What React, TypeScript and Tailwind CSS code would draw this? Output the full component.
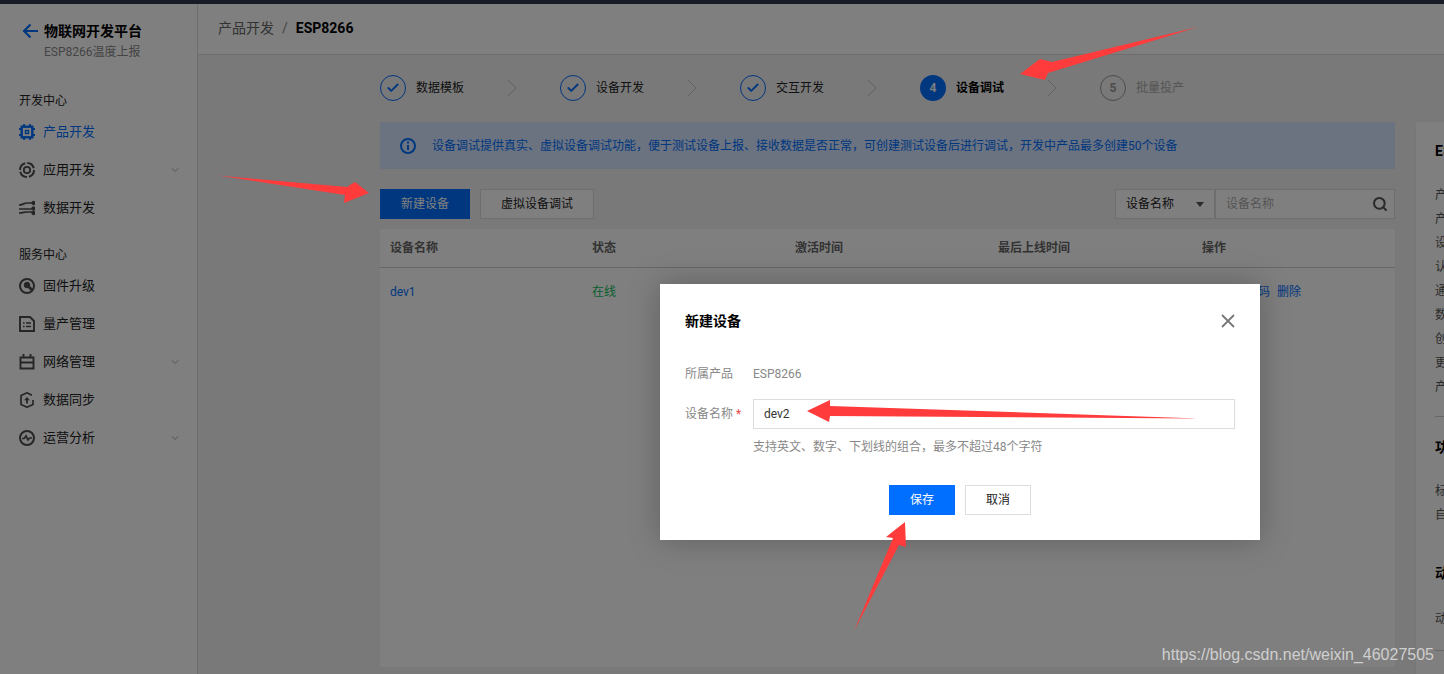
import React from 'react';
import { ChevronDown, Check, Search } from 'lucide-react';

const ChipIcon = () => (
    <svg width="16" height="16" viewBox="0 0 16 16" fill="none" stroke="currentColor" strokeWidth="2.4">
        <rect x="2.7" y="2.7" width="10.6" height="10.6" />
        <rect x="6.5" y="6.5" width="3" height="3" strokeWidth="1.4" fill="none" />
        <path d="M5 0v2M11 0v2M5 14v2M11 14v2M0 5h2M0 11h2M14 5h2M14 11h2" strokeWidth="1.8" />
    </svg>
);
const RingIcon = () => (
    <svg width="16" height="16" viewBox="0 0 16 16" fill="none" stroke="currentColor">
        <circle cx="8" cy="8" r="7" strokeWidth="2" strokeDasharray="9 2" />
        <circle cx="8" cy="8" r="3.2" strokeWidth="1.8" />
    </svg>
);
const SlidersIcon = () => (
    <svg width="16" height="16" viewBox="0 0 16 16" fill="none" stroke="currentColor" strokeWidth="1.7">
        <path d="M0 5c4 0 5-2 8-2h6M0 9h14M0 13c4 0 5-1 8-1h6" />
        <circle cx="14.5" cy="3" r="1.3" fill="currentColor" />
        <circle cx="14.5" cy="8.5" r="1.3" fill="currentColor" />
        <circle cx="14.5" cy="13" r="1.3" fill="currentColor" />
    </svg>
);
const WrenchIcon = () => (
    <svg width="16" height="16" viewBox="0 0 16 16" fill="none" stroke="currentColor">
        <circle cx="8" cy="8" r="7" strokeWidth="2" />
        <circle cx="8" cy="7" r="2.8" fill="currentColor" />
        <path d="M9 8l4.5 4.5" strokeWidth="2.8" />
    </svg>
);
const ListIcon = () => (
    <svg width="16" height="16" viewBox="0 0 16 16" fill="none" stroke="currentColor" strokeWidth="1.9">
        <path d="M1 1h10l4 4v10H1z" />
        <path d="M4 7h1.6M7 7h5M4 10.5h1.6M7 10.5h5" strokeWidth="1.6" />
    </svg>
);
const CalendarIcon = () => (
    <svg width="16" height="16" viewBox="0 0 16 16" fill="none" stroke="currentColor" strokeWidth="1.9">
        <path d="M1.5 3.5h13v11h-13zM1.5 8.5h13M4.5 0v3.5M11.5 0v3.5" />
    </svg>
);
const HexIcon = () => (
    <svg width="16" height="16" viewBox="0 0 16 16" fill="none" stroke="currentColor" strokeWidth="1.7">
        <path d="M13 3.2L8 .8 2 3.6v8.8l6 2.8 6-2.8V8" />
        <path d="M8 11.5V6.5" strokeWidth="1.8" />
        <path d="M5.2 8.2L8 5l2.8 3.2z" fill="currentColor" stroke="none" />
    </svg>
);
const PulseIcon = () => (
    <svg width="16" height="16" viewBox="0 0 16 16" fill="none" stroke="currentColor">
        <circle cx="8" cy="8" r="7" strokeWidth="2" />
        <path d="M3 8.5h2.2L7 6l2 4 1.6-2H13" strokeWidth="1.7" />
    </svg>
);
const BackArrow = () => (
    <svg width="16" height="16" viewBox="0 0 16 16" fill="none" stroke="#006eff" strokeWidth="2.2">
        <path d="M16 8H2M8.5 1.5L2 8l6.5 6.5" />
    </svg>
);
const InfoIcon = () => (
    <svg width="16" height="16" viewBox="0 0 16 16" fill="none" stroke="#006eff">
        <circle cx="8" cy="8" r="7" strokeWidth="2" />
        <path d="M8 7v5" strokeWidth="2" />
        <path d="M8 3.6v2" strokeWidth="2" />
    </svg>
);
const StepArrow = () => (
    <svg className="ml-[43px]" width="10" height="16" viewBox="0 0 10 16" fill="none" stroke="#c4c4c4">
        <path d="M1 0l8 8-8 8" />
    </svg>
);
const CloseIcon = () => (
    <svg width="14" height="14" viewBox="0 0 14 14" fill="none" stroke="#777" strokeWidth="1.8">
        <path d="M1 1l12 12M13 1L1 13" />
    </svg>
);

const NavItem = ({ icon, label, active, more }: { icon: React.ReactNode; label: string; active?: boolean; more?: boolean }) => (
    <div className={`flex h-[38px] items-center pl-[19px] pr-4 text-[13px] ${active ? 'text-[#006eff]' : 'text-[#222]'}`}>
        <span className={`mr-2 flex ${active ? 'text-[#006eff]' : 'text-[#4c4c4c]'}`}>{icon}</span>
        <span>{label}</span>
        {more && <ChevronDown className="ml-auto h-3 w-3 text-[#aaa]" />}
    </div>
);

const steps = ['数据模板', '设备开发', '交互开发', '设备调试', '批量投产'];

const Stepper = () => (
    <div className="mt-5 flex h-[26px]">
        {steps.map((name, i) => (
            <div key={name} className="flex w-[180px] items-center">
                {i < 3 && (
                    <span className="flex h-[26px] w-[26px] items-center justify-center rounded-full border border-[#006eff] text-[#006eff]">
                        <Check className="h-3.5 w-3.5" strokeWidth={3.2} />
                    </span>
                )}
                {i === 3 && (
                    <span className="flex h-[26px] w-[26px] items-center justify-center rounded-full bg-[#006eff] text-xs font-bold text-white">4</span>
                )}
                {i === 4 && (
                    <span className="flex h-[26px] w-[26px] items-center justify-center rounded-full border border-[#999] text-xs font-bold text-[#999]">5</span>
                )}
                <span className={`ml-2.5 w-12 text-xs ${i === 3 ? 'font-bold text-black' : i === 4 ? 'text-[#aaa]' : 'text-[#222]'}`}>{name}</span>
                {i < 4 && <StepArrow />}
            </div>
        ))}
    </div>
);

const infoRows = ['产品名称', '产品ID', '设备数量', '认证方式', '通信方式', '数据协议', '创建时间', '更新时间', '产品描述'];

const InfoPanel = () => (
    <aside className="mt-[67px] w-[29px] shrink-0 overflow-hidden whitespace-nowrap border-l border-[#eee] bg-white pl-[19px] pt-[19px] text-xs text-[#555]">
        <div className="text-sm leading-5 font-bold text-black">ESP8266</div>
        <div className="mt-[22px]">
            {infoRows.map((row) => (
                <div key={row} className="leading-6">{row}</div>
            ))}
        </div>
        <div className="mt-[17px] h-px bg-[#ccc]" />
        <div className="mt-5 text-sm leading-5 font-bold text-black">功能定义</div>
        <div className="mt-[22px] leading-6">标准功能</div>
        <div className="leading-6">自定义功能</div>
        <div className="mt-9 text-sm leading-5 font-bold text-black">动态注册</div>
        <div className="mt-6 leading-6">动态注册</div>
        <div className="mt-[19px] h-px bg-[#ccc]" />
    </aside>
);

const Dialog = () => (
    <div className="absolute left-[660px] top-[284px] h-[256px] w-[600px] bg-white px-[25px] pt-[27px] text-xs shadow-[0_0_30px_rgba(0,0,0,0.25)]">
        <div className="flex h-5 items-center justify-between">
            <h2 className="text-sm font-bold text-black">新建设备</h2>
            <CloseIcon />
        </div>
        <div className="mt-[33px] flex h-5 items-center text-[#888]">
            <span className="w-[68px]">所属产品</span>
            <span>ESP8266</span>
        </div>
        <div className="mt-[15px] flex items-center">
            <span className="w-[68px] text-[#888]">设备名称 <span className="text-[#e54545]">*</span></span>
            <div className="flex h-[30px] flex-1 items-center border border-[#ddd] pl-2.5 text-[#333]">dev2</div>
        </div>
        <div className="ml-[68px] mt-2 leading-5 text-[#888]">支持英文、数字、下划线的组合，最多不超过48个字符</div>
        <div className="mt-7 flex justify-center gap-2.5">
            <button className="h-[30px] w-[66px] bg-[#006eff] text-white">保存</button>
            <button className="h-[30px] w-[66px] border border-[#ddd] text-[#222]">取消</button>
        </div>
    </div>
);

export default function App() {
    return (
        <div className="relative h-screen w-screen overflow-hidden bg-[#f2f2f2] font-[Roboto,'Noto_Sans_CJK_SC',sans-serif]">
            <div className="h-1 bg-[#2f384c]" />
            <div className="flex h-[670px]">
                {/* Sidebar */}
                <aside className="w-[198px] shrink-0 border-r border-[#ddd] bg-white pt-[17px]">
                    <div className="flex h-5 items-center gap-1.5 pl-[22px] text-sm font-bold text-black">
                        <BackArrow />
                        物联网开发平台
                    </div>
                    <div className="mt-px pl-[44px] text-xs leading-5 text-[#888]">ESP8266温度上报</div>
                    <div className="mt-[29px] pl-[19px] text-xs leading-5 text-[#222]">开发中心</div>
                    <div className="mt-0.5">
                        <NavItem icon={<ChipIcon />} label="产品开发" active />
                        <NavItem icon={<RingIcon />} label="应用开发" more />
                        <NavItem icon={<SlidersIcon />} label="数据开发" />
                    </div>
                    <div className="mt-[18px] pl-[19px] text-xs leading-5 text-[#222]">服务中心</div>
                    <div className="mt-0.5">
                        <NavItem icon={<WrenchIcon />} label="固件升级" />
                        <NavItem icon={<ListIcon />} label="量产管理" />
                        <NavItem icon={<CalendarIcon />} label="网络管理" more />
                        <NavItem icon={<HexIcon />} label="数据同步" />
                        <NavItem icon={<PulseIcon />} label="运营分析" more />
                    </div>
                </aside>

                <main className="flex min-w-0 flex-1 flex-col">
                    {/* Breadcrumb */}
                    <header className="flex h-[51px] shrink-0 items-center border-b border-[#ddd] bg-white pb-0.5 pl-5 text-sm">
                        <span className="text-[#666]">产品开发</span>
                        <span className="mx-2 text-[#888]">/</span>
                        <span className="font-bold text-black">ESP8266</span>
                    </header>

                    <div className="flex min-h-0 flex-1">
                        <div className="ml-[182px] flex w-[1015px] shrink-0 flex-col">
                            <Stepper />
                            <div className="mt-[21px] flex h-[47px] items-center gap-4 bg-[#d5e7ff] pl-5 text-xs text-[#006eff]">
                                <InfoIcon />
                                设备调试提供真实、虚拟设备调试功能，便于测试设备上报、接收数据是否正常，可创建测试设备后进行调试，开发中产品最多创建50个设备
                            </div>

                            <div className="mt-5 flex h-[30px] text-xs">
                                <button className="w-[90px] bg-[#006eff] text-white">新建设备</button>
                                <button className="ml-2.5 w-[114px] border border-[#ddd] bg-white text-[#222]">虚拟设备调试</button>
                                <div className="ml-auto flex w-[100px] items-center justify-between border border-[#ddd] bg-white px-2.5 text-[#222]">
                                    设备名称
                                    <span className="h-0 w-0 border-x-[4px] border-t-[5px] border-x-transparent border-t-[#555]" />
                                </div>
                                <div className="flex w-[180px] items-center justify-between border border-[#ddd] bg-white pl-2.5 pr-1.5 text-[#aaa]">
                                    设备名称
                                    <Search className="h-4 w-4 text-[#555]" strokeWidth={3} />
                                </div>
                            </div>

                            <div className="mb-[7px] mt-2.5 flex-1 bg-white text-xs">
                                <div className="grid h-[39px] grid-cols-[202px_203px_203px_204px_1fr] items-center border-b border-[#ccc] font-bold text-[#666]">
                                    {['设备名称', '状态', '激活时间', '最后上线时间', '操作'].map((h) => (
                                        <div key={h} className="px-2.5">{h}</div>
                                    ))}
                                </div>
                                <div className="grid h-12 grid-cols-[202px_203px_203px_204px_1fr] items-center">
                                    <div className="px-2.5 text-[#006eff]">dev1</div>
                                    <div className="px-2.5 text-[#0abf5b]">在线</div>
                                    <div className="px-2.5 text-[#444]">2020-06-12 10:21:08</div>
                                    <div className="px-2.5 text-[#444]">2020-06-12 10:21:08</div>
                                    <div className="whitespace-nowrap pl-[15px] text-[#006eff]">查看 二维码<span className="ml-[7px]">删除</span></div>
                                </div>
                            </div>
                        </div>
                        <div className="w-5 shrink-0" />
                        <InfoPanel />
                    </div>
                </main>
            </div>

            {/* Scrim */}
            <div className="absolute inset-0 bg-black/50" />

            <Dialog />

            {/* Red annotation arrows */}
            <svg className="pointer-events-none absolute inset-0" width="1444" height="674" fill="#ff3b3b">
                <polygon points="1198,27 1052,62 1040,59 1020,74 1045,80 1048,73" />
                <polygon points="218,175.5 347,187 355,182 369,193 344,203 345,195" />
                <polygon points="1199,418.5 830,406 830,400 807,411 829,422 830,416" />
                <polygon points="854,631 893,538 886,537 905,522 906,547 899,545" />
            </svg>

            <div className="absolute bottom-[9px] right-[10px] font-['Liberation_Sans',sans-serif] text-base leading-5 text-[#cfcfcf]">https://blog.csdn.net/weixin_46027505</div>
        </div>
    );
}
